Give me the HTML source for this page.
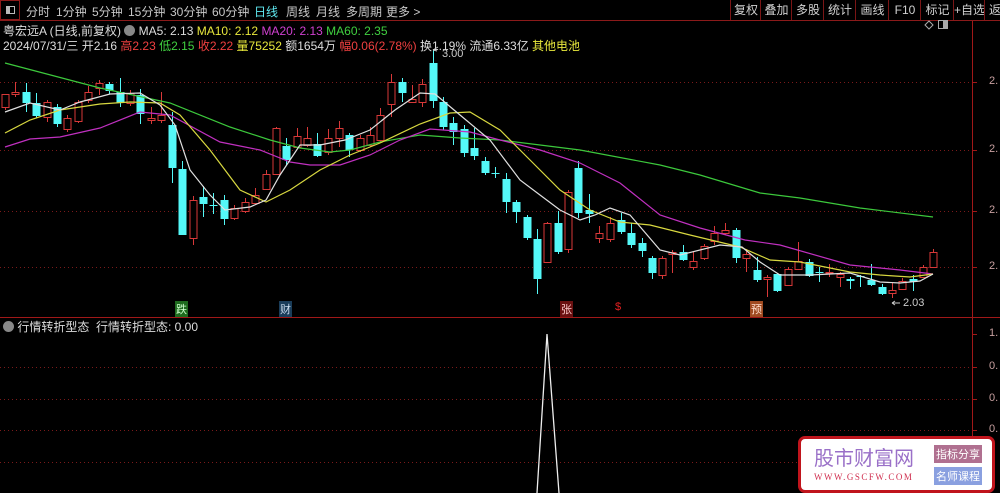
<!DOCTYPE html><html><head><meta charset="utf-8"><style>
body{margin:0;background:#000;width:1000px;height:493px;overflow:hidden;font-family:"Liberation Sans","Noto Sans CJK SC",sans-serif;position:relative}
.top{position:absolute;left:0;top:0;width:1000px;height:20px;border-bottom:1px solid #8b1a1a;font-size:12px;color:#c8c8c8}
.top span{position:absolute;top:3px}
.btn{position:absolute;top:0;height:20px;line-height:20px;border-left:1px solid #7a1515;text-align:center;font-size:12px;color:#d0d0d0}
.t{position:absolute;font-size:12px;white-space:nowrap}
.ax{position:absolute;left:989px;font-size:11px;color:#c8a0a0}
</style></head><body>
<div class="top">
<div style="position:absolute;left:0;top:0;width:20px;height:20px;border:1px solid #8b1a1a;box-sizing:border-box"><div style="position:absolute;left:5px;top:5px;width:9px;height:8px;border:1px solid #bbb;box-sizing:border-box"></div><div style="position:absolute;left:5px;top:5px;width:4px;height:8px;background:#bbb"></div></div>
<span style="left:26px">分时</span><span style="left:56px">1分钟</span><span style="left:92px">5分钟</span><span style="left:128px">15分钟</span><span style="left:170px">30分钟</span><span style="left:212px">60分钟</span><span style="left:254px;color:#5fe8f0">日线</span><span style="left:286px">周线</span><span style="left:316px">月线</span><span style="left:346px">多周期</span><span style="left:386px">更多 &gt;</span>
<div class="btn" style="left:730px;width:30px">复权</div><div class="btn" style="left:760px;width:31px">叠加</div><div class="btn" style="left:791px;width:32px">多股</div><div class="btn" style="left:823px;width:32px">统计</div><div class="btn" style="left:855px;width:33px">画线</div><div class="btn" style="left:888px;width:32px">F10</div><div class="btn" style="left:920px;width:33px">标记</div><div class="btn" style="left:953px;width:31px">+自选</div><div class="btn" style="left:984px;width:20px">返</div>
</div>
<div class="t" style="left:3px;top:22px;color:#ddd">粤宏远A (日线,前复权) <span style="display:inline-block;width:11px;height:11px;border-radius:6px;background:#888;vertical-align:-1px"></span> MA5: 2.13 <span style="color:#e8e83c">MA10: 2.12</span> <span style="color:#d040d0">MA20: 2.13</span> <span style="color:#40d040">MA60: 2.35</span></div>
<div class="t" style="left:3px;top:37px;color:#ddd">2024/07/31/三 开2.16 <span style="color:#f04040">高2.23</span> <span style="color:#40d040">低2.15</span> <span style="color:#f04040">收2.22</span> <span style="color:#e8e83c">量75252</span> 额1654万 <span style="color:#f04040">幅0.06(2.78%)</span> 换1.19% 流通6.33亿 <span style="color:#e8e83c">其他电池</span></div>
<div class="t" style="left:175px;top:301px;font-size:11px;background:#1e6a1e;color:#cfc;padding:0 1px">跌</div>
<div class="t" style="left:279px;top:301px;font-size:11px;background:#1a3d5a;color:#cde;padding:0 1px">财</div>
<div class="t" style="left:560px;top:301px;font-size:11px;background:#6a1010;color:#fcc;padding:0 1px">张</div>
<div class="t" style="left:615px;top:301px;font-size:11px;color:#e02020">$</div>
<div class="t" style="left:750px;top:301px;font-size:11px;background:#a04a20;color:#fdc;padding:0 1px">预</div>
<div class="t" style="left:442px;top:48px;font-size:11px;color:#ccc">3.00</div>
<div class="t" style="left:903px;top:297px;font-size:11px;color:#ccc">2.03</div>
<div class="t" style="left:3px;top:318px;color:#ddd"><span style="display:inline-block;width:11px;height:11px;border-radius:6px;background:#888;vertical-align:-1px"></span> 行情转折型态 &nbsp;行情转折型态: 0.00</div>
<div class="ax" style="top:75px">2.</div><div class="ax" style="top:143px">2.</div><div class="ax" style="top:204px">2.</div><div class="ax" style="top:260px">2.</div>
<div class="ax" style="top:327px">1.</div><div class="ax" style="top:360px">0.</div><div class="ax" style="top:392px">0.</div><div class="ax" style="top:423px">0.</div>
<svg id="s" width="1000" height="493" style="position:absolute;left:0;top:0" xmlns="http://www.w3.org/2000/svg">
<g stroke="#7a1a1a" stroke-dasharray="1,3" stroke-width="1">
<line x1="0" y1="82.5" x2="972" y2="82.5"/><line x1="0" y1="150.5" x2="972" y2="150.5"/><line x1="0" y1="211.5" x2="972" y2="211.5"/><line x1="0" y1="267.5" x2="972" y2="267.5"/>
<line x1="0" y1="367.5" x2="972" y2="367.5"/><line x1="0" y1="399.5" x2="972" y2="399.5"/><line x1="0" y1="430.5" x2="972" y2="430.5"/><line x1="0" y1="462.5" x2="972" y2="462.5"/>
</g>
<line x1="972.5" y1="21" x2="972.5" y2="493" stroke="#a01818"/>
<line x1="0" y1="317.5" x2="1000" y2="317.5" stroke="#a01818"/>
<g stroke="#a01818"><line x1="972" y1="82.5" x2="977" y2="82.5"/><line x1="972" y1="150.5" x2="977" y2="150.5"/><line x1="972" y1="211.5" x2="977" y2="211.5"/><line x1="972" y1="267.5" x2="977" y2="267.5"/><line x1="972" y1="334.5" x2="977" y2="334.5"/><line x1="972" y1="367.5" x2="977" y2="367.5"/><line x1="972" y1="399.5" x2="977" y2="399.5"/><line x1="972" y1="430.5" x2="977" y2="430.5"/></g>
<path d="M925 25 l4 -4 l4 4 l-4 4z" fill="none" stroke="#aaa"/>
<rect x="938.5" y="20.5" width="9" height="8" fill="none" stroke="#aaa"/><rect x="943" y="21" width="4" height="7" fill="#aaa"/>
<g id="ma" fill="none" stroke-width="1.2">
<polyline stroke="#3cc83c" points="5,63 100,88 170,103 230,127 270,140 300,148 330,152 350,150 380,142 420,135 460,138 500,140 580,150 660,165 700,175 760,193 800,198 860,208 933,217"/>
<polyline stroke="#c030c0" points="5,147 30,139 60,137 100,128 140,112 170,115 220,142 260,150 290,162 310,165 340,165 370,155 400,140 430,129 470,132 500,140 540,150 580,163 620,183 660,215 700,228 745,240 780,245 850,265 900,270 933,274"/>
<polyline stroke="#d8d840" points="5,133 30,120 60,110 100,104 130,102 160,103 180,115 210,150 240,190 266,202 290,190 320,170 350,155 380,143 420,124 450,113 470,112 500,130 530,160 560,190 590,210 620,222 650,225 690,235 740,247 770,260 800,262 850,272 880,275 910,277 933,274"/>
<polyline stroke="#e0e0e0" points="5,112 30,103 60,110 80,102 110,94 140,93 160,105 175,125 190,170 210,195 225,210 250,207 266,200 280,175 300,145 320,145 345,140 370,130 395,110 420,93 435,94 460,115 490,140 520,180 540,195 560,210 580,220 595,215 610,208 630,215 660,250 680,255 720,245 742,247 760,262 780,275 810,275 850,273 880,282 900,283 920,281 933,274"/>
</g>
<polyline fill="none" stroke="#eee" stroke-width="1.3" points="537,493 547,334 559,493"/>
<path d="M433 50 l5 -3 M433 50 l4 1" stroke="#ccc"/><path d="M892 303 h8 M892 303 l3 -2 M892 303 l3 2" stroke="#ccc"/>
</svg>
<div style="position:absolute;left:798px;top:436px;width:197px;height:57px;background:#fff;border:3px solid #c0141c;border-radius:7px;box-sizing:border-box">
<div class="t" style="left:13px;top:3px;font-size:20px;color:#9a70c8">股市财富网</div>
<div class="t" style="left:13px;top:33px;font-size:9px;color:#d03050;letter-spacing:1.5px;font-family:'Liberation Serif',serif">WWW.GSCFW.COM</div>
<div class="t" style="left:133px;top:6px;font-size:11px;color:#fff;background:#b07090;padding:1px 2px">指标分享</div>
<div class="t" style="left:133px;top:28px;font-size:11px;color:#fff;background:#8aa0e0;padding:1px 2px">名师课程</div>
</div>
<script>
var D=[[5,94,107,94,110,'r'],[15,92,94,82,97,'r'],[26,92,103,83,112,'c'],[36,103,116,93,118,'c'],[47,102,117,100,122,'r'],[57,107,124,104,127,'c'],[67,118,129,115,132,'r'],[78,102,121,100,123,'r'],[88,92,100,86,103,'r'],[99,83,88,80,95,'r'],[109,84,91,82,94,'c'],[120,92,103,78,107,'c'],[130,93,103,90,106,'r'],[140,95,114,89,124,'c'],[151,118,120,107,124,'r'],[161,115,120,92,123,'r'],[172,125,168,112,183,'c'],[182,169,235,161,235,'c'],[193,200,238,196,245,'r'],[203,197,204,186,217,'c'],[213,205,206,193,214,'c'],[224,200,219,195,225,'c'],[234,208,218,205,220,'r'],[245,202,211,198,213,'r'],[255,195,203,188,205,'r'],[266,174,189,170,190,'r'],[276,128,174,127,175,'r'],[286,146,160,138,165,'c'],[297,136,147,128,148,'r'],[307,138,145,127,147,'r'],[317,144,156,133,157,'c'],[328,138,152,129,155,'r'],[339,128,138,121,147,'r'],[349,135,150,133,157,'c'],[360,138,150,135,152,'r'],[370,135,145,127,147,'r'],[380,115,140,108,142,'r'],[391,82,104,74,117,'r'],[402,82,93,78,102,'c'],[412,99,102,85,103,'r'],[422,84,102,79,107,'r'],[433,63,101,50,108,'c'],[443,102,127,97,130,'c'],[453,123,132,117,145,'c'],[464,129,153,125,157,'c'],[474,148,156,128,160,'c'],[485,161,173,157,175,'c'],[495,173,174,167,178,'c'],[506,179,202,173,213,'c'],[516,202,212,200,223,'c'],[527,217,238,215,240,'c'],[537,239,279,229,294,'c'],[547,223,262,222,263,'r'],[558,223,252,211,254,'c'],[568,192,249,190,253,'r'],[578,168,213,161,218,'c'],[589,210,214,194,223,'c'],[599,233,238,226,243,'r'],[610,223,239,217,242,'r'],[621,220,232,213,234,'c'],[631,233,245,223,248,'c'],[642,243,251,238,257,'c'],[652,258,273,256,279,'c'],[662,258,275,256,279,'r'],[672,252,254,250,273,'r'],[683,252,260,245,261,'c'],[693,261,267,252,270,'r'],[704,246,258,244,260,'r'],[714,233,241,226,245,'r'],[725,230,233,223,235,'r'],[736,230,258,228,263,'c'],[746,254,258,249,272,'r'],[757,270,280,257,282,'c'],[767,277,279,275,297,'r'],[777,274,291,273,292,'c'],[788,269,285,267,286,'r'],[798,261,269,242,270,'r'],[809,262,276,259,277,'c'],[819,272,273,267,282,'c'],[829,272,273,264,277,'r'],[840,274,277,272,287,'r'],[850,279,281,277,289,'c'],[860,276,277,275,287,'c'],[871,280,285,264,286,'c'],[882,287,294,284,295,'c'],[892,290,293,283,298,'r'],[902,281,289,278,290,'r'],[913,279,282,275,291,'c'],[923,267,277,265,278,'r'],[933,252,267,249,268,'r']];
var s='';D.forEach(function(d){var col=d[5]=='r'?'#d83838':'#54f8f8';
s+='<line x1="'+(d[0]+.5)+'" y1="'+d[3]+'" x2="'+(d[0]+.5)+'" y2="'+d[4]+'" stroke="'+col+'"/>';
var h=Math.max(1,d[2]-d[1]);
if(d[5]=='r')s+='<rect x="'+(d[0]-3)+'" y="'+d[1]+'.5" width="7" height="'+h+'" fill="#000" stroke="'+col+'"/>';
else s+='<rect x="'+(d[0]-3.5)+'" y="'+d[1]+'" width="8" height="'+h+'" fill="'+col+'"/>';});
var g=document.createElementNS('http://www.w3.org/2000/svg','g');g.innerHTML=s;var sv=document.getElementById('s');sv.insertBefore(g,document.getElementById('ma'));
</script>
</body></html>
